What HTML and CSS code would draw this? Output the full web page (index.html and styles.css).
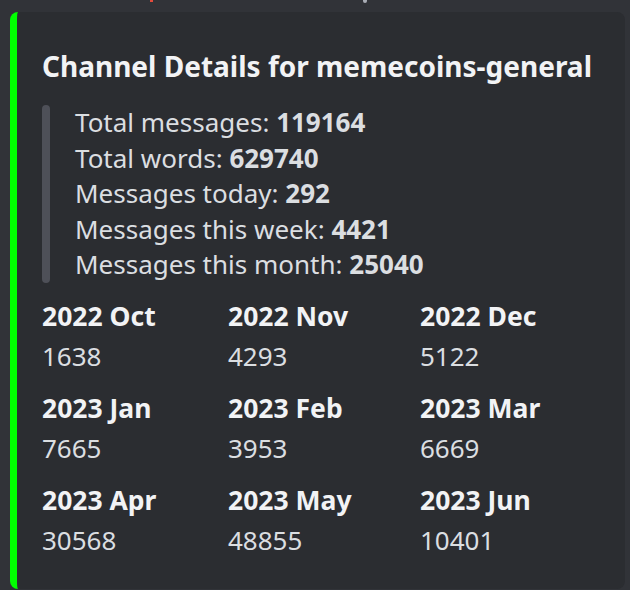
FILE: index.html
```html
<!DOCTYPE html>
<html>
<head>
<meta charset="utf-8">
<link rel="stylesheet" href="styles.css">
</head>
<body>
<div class="prev">
  <span class="mark mark-red"></span>
  <span class="mark mark-gray"></span>
</div>
<div class="embed">
  <div class="title">Channel Details for memecoins-general</div>
  <div class="quote">
    <div class="quote-bar"></div>
    <div class="quote-text">
      <div>Total messages: <b>119164</b></div>
      <div>Total words: <b>629740</b></div>
      <div>Messages today: <b>292</b></div>
      <div>Messages this week: <b>4421</b></div>
      <div>Messages this month: <b>25040</b></div>
    </div>
  </div>
  <div class="fields">
    <div class="field"><div class="fname">2022 Oct</div><div class="fval">1638</div></div>
    <div class="field"><div class="fname">2022 Nov</div><div class="fval">4293</div></div>
    <div class="field"><div class="fname">2022 Dec</div><div class="fval">5122</div></div>
    <div class="field"><div class="fname">2023 Jan</div><div class="fval">7665</div></div>
    <div class="field"><div class="fname">2023 Feb</div><div class="fval">3953</div></div>
    <div class="field"><div class="fname">2023 Mar</div><div class="fval">6669</div></div>
    <div class="field"><div class="fname">2023 Apr</div><div class="fval">30568</div></div>
    <div class="field"><div class="fname">2023 May</div><div class="fval">48855</div></div>
    <div class="field"><div class="fname">2023 Jun</div><div class="fval">10401</div></div>
  </div>
</div>
</body>
</html>
```
FILE: styles.css
```css
html, body {
  margin: 0;
  padding: 0;
  background: #313338;
  overflow: hidden;
}
body {
  font-family: "Noto Sans", "Open Sans", sans-serif;
  color: #dbdee1;
  width: 630px;
  height: 590px;
}
.prev {
  height: 12px;
  display: flex;
  align-items: flex-start;
}
.mark {
  display: block;
  height: 2px;
}
.mark-red {
  width: 3px;
  margin-left: 150px;
  background: #e34b3c;
}
.mark-gray {
  width: 4px;
  height: 3px;
  margin-left: 210px;
  background: #a9adb5;
  border-radius: 0 0 2px 2px;
}
.embed {
  margin-left: 10px;
  width: 615px;
  height: 577px;
  box-sizing: border-box;
  background: #2b2d31;
  border-left: 7px solid #00ff00;
  border-radius: 8px;
  padding: 34px 0 0 25px;
}
.title {
  font-size: 28px;
  font-weight: 700;
  line-height: 40px;
  color: #f2f3f5;
}
.quote {
  display: flex;
  margin-top: 19px;
}
.quote-bar {
  width: 8px;
  border-radius: 4px;
  background: #4e5058;
  flex: none;
}
.quote-text {
  padding-left: 25px;
  font-size: 26px;
  line-height: 35.6px;
}
.quote-text b {
  font-weight: 700;
  color: #dbdee1;
}
.fields {
  display: grid;
  grid-template-columns: 186px 192px 1fr;
  row-gap: 12px;
  margin-top: 13px;
}
.fname {
  font-size: 26.5px;
  font-weight: 700;
  line-height: 40px;
  color: #f2f3f5;
}
.fval {
  font-size: 26px;
  line-height: 40px;
  color: #dbdee1;
}
```
